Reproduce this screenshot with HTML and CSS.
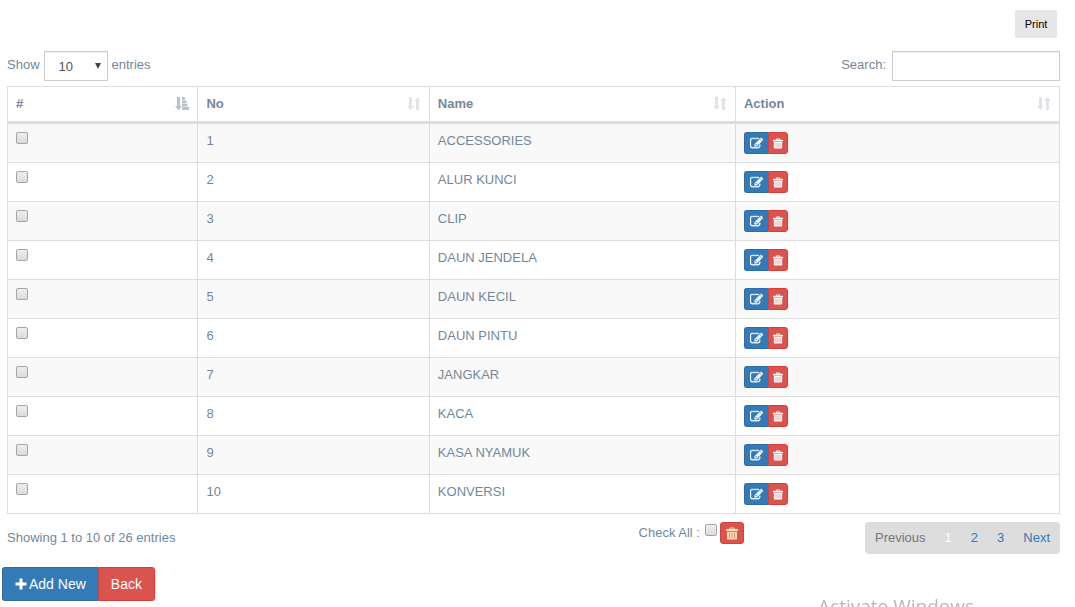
FILE: index.html
```
<!DOCTYPE html>
<html lang="en">
<head>
<meta charset="utf-8">
<title>Categories</title>
<link rel="stylesheet" href="styles.css">
</head>
<body>
<svg class="sprite" aria-hidden="true">
  <symbol id="edit" viewBox="0 0 1792 1792"><path d="M888 1184l116-116-152-152-116 116v56h96v96h56zm440-720q-16-16-33 1l-350 350q-17 17-1 33t33-1l350-350q17-17 1-33zm80 594v190q0 119-84.500 203.500t-203.500 84.500h-832q-119 0-203.500-84.500t-84.500-203.500v-832q0-119 84.500-203.500t203.500-84.500h832q63 0 117 25 15 7 18 23 3 17-9 29l-49 49q-14 14-32 8-23-6-45-6h-832q-66 0-113 47t-47 113v832q0 66 47 113t113 47h832q66 0 113-47t47-113v-126q0-13 9-22l64-64q15-15 35-7t20 29zm-96-738l288 288-672 672h-288v-288zm444 132l-92 92-288-288 92-92q28-28 68-28t68 28l152 152q28 28 28 68t-28 68z"/></symbol>
  <symbol id="trash" viewBox="0 0 12 12"><path fill-rule="evenodd" d="M3.500 1Q3.500 0 4.500 0H7.500Q8.500 0 8.500 1V1.500H11.200Q12 1.500 12 2.300V3.500H0V2.300Q0 1.500 .8 1.500H3.500ZM4.700 1V1.500H7.300V1ZM1 4.200H11V10.800Q11 12 9.800 12H2.200Q1 12 1 10.800ZM3.300 5.200V10.800H3.900V5.200ZM5.700 5.200V10.800H6.300V5.200ZM8.100 5.200V10.800H8.700V5.200Z"/></symbol>
  <symbol id="plus" viewBox="0 0 12 12"><path d="M4.500 0.500H7.500V4.500H11.500V7.500H7.500V11.500H4.500V7.500H.5V4.500H4.500Z"/></symbol>
  <symbol id="sort" viewBox="0 0 14 14"><path d="M2 0H5V9H7L3.500 13 0 9H2ZM9 13H12V4H14L10.500 0 7 4H9Z"/></symbol>
  <symbol id="sort-asc" viewBox="0 0 14 14"><path d="M2 0H5V9H7L3.500 13.500 0 9H2ZM7 0H10V3H7ZM7 3.500H11.500V6.500H7ZM7 7H12.500V9.500H7ZM7 10H14V13H7Z"/></symbol>
  <symbol id="caret" viewBox="0 0 8 6"><path d="M1 0H7L4 6Z"/></symbol>
</svg>

<main class="page">
  <div class="toolbar"><button class="print" type="button">Print</button></div>

  <div class="filters">
    <label class="length">Show
      <span class="select-wrap">
        <select class="field select"><option>10</option><option>25</option><option>50</option><option>100</option></select>
        <svg class="caret"><use href="#caret"/></svg>
      </span>
      entries</label>
    <label class="search">Search: <input class="field search-input" type="search"></label>
  </div>

  <table class="grid">
    <colgroup><col class="col-check"><col class="col-no"><col class="col-name"><col class="col-action"></colgroup>
    <thead>
      <tr>
        <th><div class="head">#<svg class="sort sorted"><use href="#sort-asc"/></svg></div></th>
        <th><div class="head">No<svg class="sort"><use href="#sort"/></svg></div></th>
        <th><div class="head">Name<svg class="sort"><use href="#sort"/></svg></div></th>
        <th><div class="head">Action<svg class="sort"><use href="#sort"/></svg></div></th>
      </tr>
    </thead>
    <tbody id="rows"></tbody>
  </table>

  <div class="footer">
    <div class="info">Showing 1 to 10 of 26 entries</div>
    <div class="check-all">
      <label class="check-label" for="all">Check All :</label>
      <input class="check" type="checkbox" id="all">
      <button class="btn btn-danger btn-single" type="button" aria-label="Delete selected"><svg class="icon-trash-lg"><use href="#trash"/></svg></button>
    </div>
    <nav class="pager" aria-label="Pages">
      <a class="disabled">Previous</a>
      <a class="current" href="#">1</a>
      <a href="#">2</a>
      <a href="#">3</a>
      <a href="#">Next</a>
    </nav>
  </div>
</main>

<div class="actions">
  <button class="btn btn-primary btn-large" type="button"><svg class="icon-plus"><use href="#plus"/></svg>Add New</button><button class="btn btn-danger btn-large" type="button">Back</button>
</div>

<div class="watermark"><span class="watermark-text">Activate Windows</span></div>
<script src="rows.js"></script>
</body>
</html>
```
FILE: styles.css
```
* { box-sizing: border-box; }

body {
  margin: 0;
  background: #fff;
  color: #73879c;
  font: 13px/18px "Liberation Sans", Arial, sans-serif;
}

button, input, select { font-family: inherit; margin: 0; }
svg { display: block; fill: currentColor; }
.sprite { display: none; }
.page { padding: 10px 15px 0 7px; }

.toolbar { display: flex; justify-content: flex-end; padding-right: 3px; }
.print {
  width: 42px;
  height: 28px;
  padding: 0;
  border: 0;
  border-radius: 2px;
  background: #e6e6e6;
  color: #000;
  font-size: 11px;
}

.filters { display: flex; justify-content: space-between; margin: 13px 0 5px; }
.length, .search { display: flex; height: 30px; line-height: 28px; }
.length { gap: 4px; }
.search { gap: 6px; }
.field {
  height: 30px;
  border: 1px solid #ccc;
  border-radius: 0;
  background: #fff;
  box-shadow: inset 0 1px 1px rgba(0, 0, 0, 0.075);
  appearance: none;
  font-size: 13px;
}
.select-wrap { display: block; position: relative; }
.select { width: 64px; padding: 0 14px; color: #555; }
.caret { position: absolute; right: 6px; top: 12px; width: 8px; height: 6px; color: #444; pointer-events: none; }
.search-input { width: 168px; padding: 5px 10px; }

.grid {
  width: 100%;
  table-layout: fixed;
  border-collapse: separate;
  border-spacing: 0;
  border: 1px solid #ddd;
  border-width: 1px 0 0 1px;
}
.col-check { width: 18.1%; }
.col-no { width: 22%; }
.col-name { width: 29.1%; }
.grid th, .grid td {
  padding: 8px;
  border: 1px solid #ddd;
  border-width: 0 1px 1px 0;
  text-align: left;
  vertical-align: top;
}
.grid th { border-bottom-width: 3px; }
.grid tbody tr:nth-child(odd) { background: #f9f9f9; }
.head { display: flex; justify-content: space-between; align-items: flex-start; }
.sort { width: 14px; height: 14px; margin-top: 2px; color: #e0e4e9; }
.sorted { color: #b9c3cd; }

.check {
  display: block;
  width: 12px;
  height: 12px;
  appearance: none;
  border: 1px solid #a5a5a5;
  border-radius: 2px;
  background: linear-gradient(#eee, #dcdcdc);
}
.check:checked { background: #337ab7; }

.btn {
  display: flex;
  align-items: center;
  justify-content: center;
  border: 1px solid;
  border-radius: 3px;
  color: #fff;
}
.btn-primary { background: #337ab7; border-color: #2e6da4; }
.btn-danger { background: #d9534f; border-color: #d43f3a; }
.btn-group { display: flex; }
.btn-small { width: 24px; height: 22px; padding: 0; }
.btn-small.btn-danger { width: 20px; }
.btn-primary { border-radius: 3px 0 0 3px; border-right-width: 0; }
.btn-primary + .btn-danger { border-radius: 0 3px 3px 0; }
.icon-edit { width: 13px; height: 13px; stroke: currentColor; stroke-width: 50; }
.icon-trash { width: 10px; height: 11px; }
.icon-trash-lg { width: 12px; height: 13px; color: #ffdfb0; }

.footer { display: flex; align-items: flex-start; padding-top: 8px; }
.info { flex: 1; padding-top: 7px; }
.check-all { display: flex; align-items: flex-start; }
.check-all .check { margin: 2px 3px 0 5px; }
.check-label { line-height: 22px; }
.btn-single { width: 24px; height: 22px; padding: 0; }
.check-all + .pager { margin-left: 121px; }
.pager {
  display: flex;
  gap: 19px;
  padding: 7px 10px;
  border-radius: 4px;
  background: #ddd;
}
.pager a { color: #337ab7; text-decoration: none; }
.pager .disabled { color: #777; }
.pager .current { color: #fff; }

.actions { display: flex; padding: 13px 0 6px 2px; }
.btn-large { height: 34px; padding: 0 12px; font-size: 14px; }
.icon-plus { width: 12px; height: 12px; margin-right: 2px; }

.watermark {
  position: fixed;
  right: 101px;
  bottom: 0;
  height: 13px;
  overflow: hidden;
  color: #b8b8b8;
  font: 19px/24px "Open Sans", sans-serif;
  pointer-events: none;
}
.watermark-text { display: block; }
```
FILE: rows.js
```
const names = ["ACCESSORIES", "ALUR KUNCI", "CLIP", "DAUN JENDELA", "DAUN KECIL", "DAUN PINTU", "JANGKAR", "KACA", "KASA NYAMUK", "KONVERSI"];
document.getElementById("rows").innerHTML = names.map((name, i) => `
  <tr>
    <td><input class="check" type="checkbox" aria-label="Select ${name}"></td>
    <td>${i + 1}</td>
    <td>${name}</td>
    <td><div class="btn-group">
      <button class="btn btn-primary btn-small" type="button" aria-label="Edit ${name}"><svg class="icon-edit"><use href="#edit"/></svg></button>
      <button class="btn btn-danger btn-small" type="button" aria-label="Delete ${name}"><svg class="icon-trash"><use href="#trash"/></svg></button>
    </div></td>
  </tr>`).join("");
document.getElementById("all").addEventListener("change", (e) => {
  document.querySelectorAll("#rows .check").forEach((box) => { box.checked = e.target.checked; });
});
```
